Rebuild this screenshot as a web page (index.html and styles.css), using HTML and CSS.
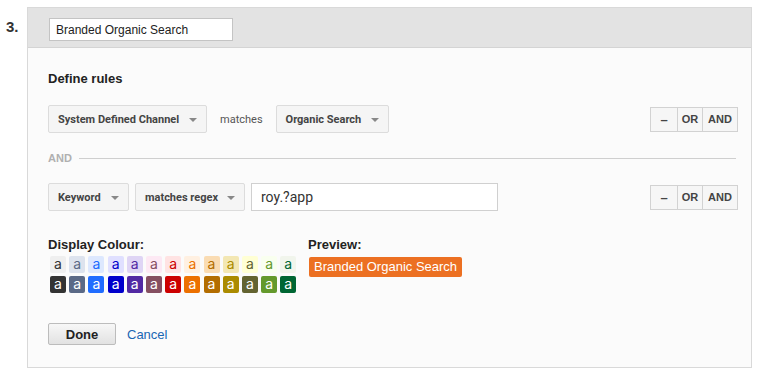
FILE: index.html
```html
<!DOCTYPE html>
<html lang="en">
<head>
<meta charset="UTF-8">
<meta name="viewport" content="width=device-width, initial-scale=1.0">
<title>Channel Rule</title>
<link rel="stylesheet" href="styles.css">
</head>
<body>

<div class="step">
    <div class="step-num">3.</div>

    <div class="panel">
        <div class="panel-head">
            <input type="text" class="name-input" value="Branded Organic Search">
        </div>

        <div class="panel-body">
            <div class="section-title">Define rules</div>

            <div class="rule-row">
                <div class="rule-fields">
                    <div class="dropdown dd-channel">System Defined Channel <span class="arrow"></span></div>
                    <span class="op-text">matches</span>
                    <div class="dropdown dd-organic">Organic Search <span class="arrow"></span></div>
                </div>
                <div class="logic-btns">
                    <div class="logic-btn btn-minus">&ndash;</div>
                    <div class="logic-btn btn-or">OR</div>
                    <div class="logic-btn btn-and">AND</div>
                </div>
            </div>

            <div class="and-divider">
                <span>AND</span>
                <div class="line"></div>
            </div>

            <div class="rule-row">
                <div class="rule-fields">
                    <div class="dropdown dd-keyword">Keyword <span class="arrow"></span></div>
                    <div class="dropdown dd-regex">matches regex <span class="arrow"></span></div>
                    <input type="text" class="value-input" value="roy.?app">
                </div>
                <div class="logic-btns">
                    <div class="logic-btn btn-minus">&ndash;</div>
                    <div class="logic-btn btn-or">OR</div>
                    <div class="logic-btn btn-and">AND</div>
                </div>
            </div>

            <div class="colour-section">
                <div class="colour-col">
                    <div class="label">Display Colour:</div>
                    <div class="swatches" id="swatches"></div>
                </div>
                <div class="preview-col">
                    <div class="label">Preview:</div>
                    <span class="preview-tag">Branded Organic Search</span>
                </div>
            </div>

            <div class="actions">
                <button class="done-btn">Done</button>
                <a href="#" class="cancel-link">Cancel</a>
            </div>
        </div>
    </div>
</div>

<script>
    // light background / text colour pairs, then the solid versions
    var colours = [
        ["#efefef", "#333333"],
        ["#dde3ee", "#5a6986"],
        ["#dde8fe", "#206cff"],
        ["#e0e0ff", "#0000cc"],
        ["#dfd5f5", "#5229a3"],
        ["#fde9f4", "#854f61"],
        ["#ffe3e3", "#cc0000"],
        ["#fff0e1", "#ec7000"],
        ["#fadcb3", "#b36d00"],
        ["#f3e7b3", "#ab8b00"],
        ["#ffffd4", "#636330"],
        ["#f9ffef", "#64992c"],
        ["#f1f5ec", "#006633"]
    ];

    var box = document.getElementById("swatches");

    colours.forEach(function(c) {
        var s = document.createElement("span");
        s.className = "swatch";
        s.textContent = "a";
        s.style.background = c[0];
        s.style.color = c[1];
        box.appendChild(s);
    });

    colours.forEach(function(c) {
        var s = document.createElement("span");
        s.className = "swatch";
        s.textContent = "a";
        s.style.background = c[1];
        s.style.color = "#fff";
        box.appendChild(s);
    });
</script>

</body>
</html>
```

FILE: styles.css
```css
body {
    font-family: Arial, "Liberation Sans", sans-serif;
    background-color: #fff;
    color: #222;
    margin: 0;
    padding: 0;
}

.step {
    display: flex;
    margin-top: 7px;
}

.step-num {
    width: 27px;
    box-sizing: border-box;
    padding: 11px 0 0 6px;
    font-size: 15px;
    font-weight: bold;
    color: #333;
}

.panel {
    width: 725px;
    border: 1px solid #d9d9d9;
    box-sizing: border-box;
    background-color: #fbfbfb;
}

.panel-head {
    height: 40px;
    background-color: #e3e3e3;
    border-bottom: 1px solid #d4d4d4;
    padding: 10px 0 0 21px;
    box-sizing: border-box;
}

.name-input {
    width: 184px;
    height: 23px;
    box-sizing: border-box;
    border: 1px solid #c4c4c4;
    background: #fff;
    padding: 0 6px;
    font-family: Arial, "Liberation Sans", sans-serif;
    font-size: 12px;
    color: #222;
    margin: 0;
}

.panel-body {
    padding: 23px 14px 22px 20px;
}

.section-title {
    font-size: 13px;
    font-weight: bold;
    line-height: 16px;
    color: #222;
}

.rule-row {
    display: flex;
    justify-content: space-between;
    align-items: center;
    margin-top: 18px;
    height: 28px;
}

.rule-fields {
    display: flex;
    align-items: center;
    height: 28px;
}

.dropdown {
    height: 28px;
    box-sizing: border-box;
    border: 1px solid #dcdcdc;
    border-radius: 2px;
    background-color: #f5f5f5;
    font-family: Roboto, Arial, sans-serif;
    font-size: 11px;
    font-weight: bold;
    color: #444;
    white-space: nowrap;
    display: flex;
    align-items: center;
    justify-content: space-between;
    padding: 0 9px 0 9px;
}

.dropdown .arrow {
    width: 0;
    height: 0;
    border-left: 4px solid transparent;
    border-right: 4px solid transparent;
    border-top: 4px solid #888;
    margin-left: 8px;
    margin-top: 1px;
    flex-shrink: 0;
}

.dd-channel { width: 159px; }
.dd-organic { width: 113px; }
.dd-keyword { width: 81px; }
.dd-regex { width: 110px; margin-left: 6px; }

.op-text {
    font-family: Roboto, Arial, sans-serif;
    font-size: 11px;
    color: #555;
    margin: 0 13px;
}

.value-input {
    width: 247px;
    height: 28px;
    box-sizing: border-box;
    border: 1px solid #d0d0d0;
    background: #fff;
    margin: 0 0 0 6px;
    padding: 0 9px;
    font-family: Roboto, Arial, sans-serif;
    font-size: 14px;
    color: #333;
}

.logic-btns {
    display: flex;
    margin-right: -1px;
}

.logic-btn {
    height: 25px;
    box-sizing: border-box;
    border: 1px solid #d2d2d2;
    background-color: #f6f6f6;
    font-size: 11px;
    font-weight: bold;
    color: #444;
    display: flex;
    align-items: center;
    justify-content: center;
}

.logic-btn + .logic-btn {
    border-left: none;
}

.btn-minus { width: 28px; font-size: 13px; }
.btn-or { width: 25px; }
.btn-and { width: 35px; }

.and-divider {
    display: flex;
    align-items: center;
    margin-top: 18px;
    height: 14px;
}

.and-divider span {
    font-size: 11px;
    font-weight: bold;
    color: #b0b0b0;
    margin-right: 7px;
}

.and-divider .line {
    flex: 1;
    height: 1px;
    background-color: #cfcfcf;
    margin-right: 1px;
}

.colour-section {
    display: flex;
    margin-top: 26px;
}

.colour-col {
    width: 260px;
}

.label {
    font-size: 13px;
    font-weight: bold;
    line-height: 16px;
    color: #222;
}

.swatches {
    display: grid;
    grid-template-columns: repeat(13, 16px);
    column-gap: 3.2px;
    row-gap: 3px;
    margin: 3px 0 0 2px;
}

.swatch {
    width: 16px;
    height: 17px;
    border-radius: 2px;
    font-family: Inter, Arial, sans-serif;
    font-size: 14px;
    line-height: 16px;
    text-align: center;
}

.preview-col {
    display: flex;
    flex-direction: column;
    align-items: flex-start;
}

.preview-tag {
    margin: 4px 0 0 1px;
    background-color: #ec7022;
    color: #fff;
    font-size: 13px;
    line-height: 20px;
    padding: 0 5px;
    border-radius: 2px;
    white-space: nowrap;
}

.actions {
    display: flex;
    align-items: center;
    margin-top: 30px;
}

.done-btn {
    width: 68px;
    height: 22px;
    border: 1px solid #bcbcbc;
    border-radius: 2px;
    background: linear-gradient(#f7f7f7, #e2e2e2);
    font-family: Arial, "Liberation Sans", sans-serif;
    font-size: 13px;
    font-weight: bold;
    color: #222;
    padding: 0;
    cursor: pointer;
}

.cancel-link {
    margin-left: 11px;
    font-size: 13px;
    color: #1a66b3;
    text-decoration: none;
}
```
